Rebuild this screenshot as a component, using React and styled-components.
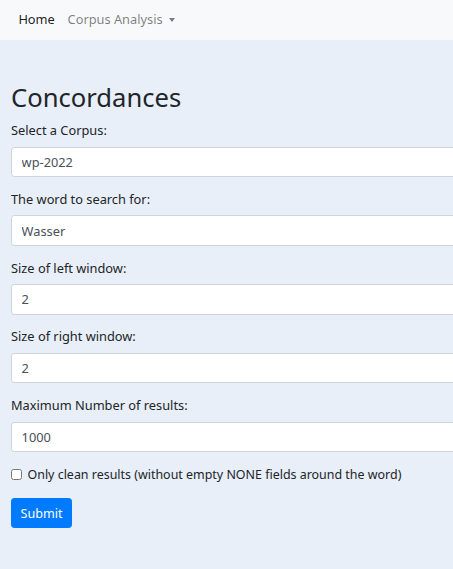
import styled, { createGlobalStyle } from 'styled-components'

const GlobalStyle = createGlobalStyle`
  html, body {
    margin: 0;
    padding: 0;
    background-color: #e8eff8;
    overflow: hidden;
  }
  body {
    font-family: 'Segoe UI', 'Noto Sans', 'Open Sans', sans-serif;
    font-size: 12.8px;
    line-height: 1.5;
    color: #212529;
  }
`

const Navbar = styled.nav`
  display: flex;
  align-items: center;
  height: 40px;
  padding: 0 12px;
  background-color: #f8f9fa;
  box-sizing: border-box;
`

const NavLink = styled.a`
  display: flex;
  align-items: center;
  padding: 0 6.4px;
  font-size: 12.8px;
  color: ${(p) => (p.$active ? 'rgba(0, 0, 0, 0.9)' : 'rgba(0, 0, 0, 0.5)')};
  text-decoration: none;
  cursor: pointer;
`

const Caret = styled.span`
  display: inline-block;
  margin-left: 6px;
  border-top: 4px solid rgba(0, 0, 0, 0.5);
  border-left: 3.5px solid transparent;
  border-right: 3.5px solid transparent;
`

const Container = styled.main`
  width: 480px;
  padding: 43px 11px 40px;
`

const Title = styled.h2`
  margin: 0 0 7.4px;
  font-size: 25.6px;
  font-weight: 400;
  line-height: 1.2;
  color: #212529;
`

const FormGroup = styled.div`
  margin-bottom: 12.8px;
`

const Label = styled.label`
  display: block;
  margin-bottom: 6.4px;
  font-size: 12.8px;
`

const Input = styled.input`
  display: block;
  width: 100%;
  height: 30.4px;
  box-sizing: border-box;
  padding: 0 9.6px;
  font-family: inherit;
  font-size: 12.8px;
  color: #495057;
  background-color: #fff;
  border: 1px solid #ced4da;
  border-radius: 3.2px;
  outline: none;
`

const CheckRow = styled.label`
  display: flex;
  align-items: center;
  margin-bottom: 13.8px;
  font-size: 12.45px;
  line-height: 19.2px;
`

const Checkbox = styled.input`
  width: 10.5px;
  height: 10.5px;
  margin: 0 6px 0 0;
`

const Button = styled.button`
  height: 30.4px;
  padding: 0 8.6px;
  font-family: inherit;
  font-size: 12.6px;
  color: #fff;
  background-color: #007bff;
  border: 1px solid #007bff;
  border-radius: 3.2px;
  cursor: pointer;
`

const fields = [
  { id: 'corpus', label: 'Select a Corpus:', value: 'wp-2022' },
  { id: 'word', label: 'The word to search for:', value: 'Wasser' },
  { id: 'left', label: 'Size of left window:', value: '2' },
  { id: 'right', label: 'Size of right window:', value: '2' },
  { id: 'max', label: 'Maximum Number of results:', value: '1000' },
]

export default function App() {
  return (
    <>
      <GlobalStyle />
      <Navbar>
        <NavLink $active>Home</NavLink>
        <NavLink>
          Corpus Analysis
          <Caret />
        </NavLink>
      </Navbar>
      <Container>
        <Title>Concordances</Title>
        <form onSubmit={(e) => e.preventDefault()}>
          {fields.map((f) => (
            <FormGroup key={f.id}>
              <Label htmlFor={f.id}>{f.label}</Label>
              <Input id={f.id} defaultValue={f.value} />
            </FormGroup>
          ))}
          <CheckRow>
            <Checkbox type="checkbox" />
            Only clean results (without empty NONE fields around the word)
          </CheckRow>
          <Button type="submit">Submit</Button>
        </form>
      </Container>
    </>
  )
}
